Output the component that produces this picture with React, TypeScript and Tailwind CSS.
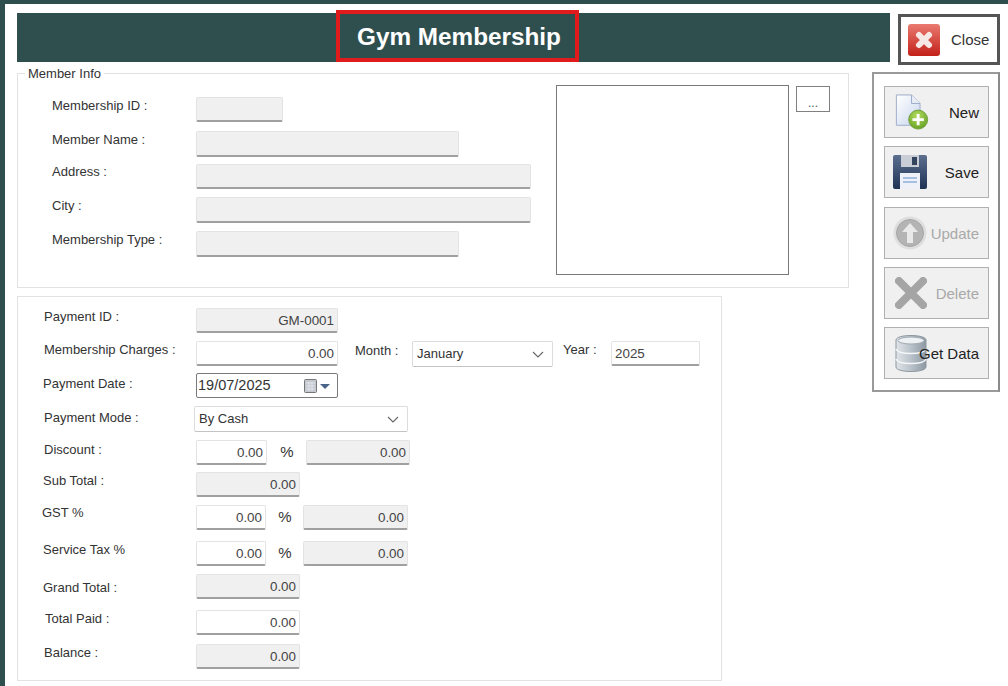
import React from "react";

const font = { fontFamily: '"Liberation Sans", Arial, sans-serif' };

const boxBase =
  "block h-full rounded-[2px] border border-[#e3e3e3] border-b-2 border-b-[#a0a0a0] px-[3px] text-[13.4px] outline-none";

function Field({ w, value = "", gray, left }: { w: string; value?: string; gray?: boolean; left?: boolean }) {
  return (
    <input
      readOnly
      value={value}
      className={`${boxBase} ${w} ${gray ? "bg-[#f0f0f0] text-[#444]" : "bg-white text-[#444]"} ${left ? "text-left" : "text-right"}`}
    />
  );
}

function Combo({ w, value, className = "" }: { w: string; value: string; className?: string }) {
  return (
    <div className={`flex h-[26px] items-center justify-between rounded-[2px] border border-[#dcdcdc] border-b-[#c4c4c4] bg-white pl-[4px] pr-[8px] text-[13px] text-[#333] ${w} ${className}`}>
      <span>{value}</span>
      <svg width="12" height="7" viewBox="0 0 12 7" fill="none" stroke="#666" strokeWidth="1.1">
        <path d="M1 1l5 5 5-5" />
      </svg>
    </div>
  );
}

function Label({ text, className = "" }: { text: string; className?: string }) {
  return <div className={`h-[16px] shrink-0 whitespace-nowrap text-[13px] leading-[16px] text-[#333] ${className}`}>{text}</div>;
}

function Percent({ className }: { className: string }) {
  return <div className={`pl-px text-center text-[15px] leading-[23px] text-[#333] ${className}`}>%</div>;
}

function NewIcon() {
  return (
    <svg width="34" height="36" viewBox="0 0 35 38">
      <defs>
        <linearGradient id="pg" x1="0" y1="0" x2="1" y2="1">
          <stop offset="0" stopColor="#ffffff" />
          <stop offset="1" stopColor="#c9d6ee" />
        </linearGradient>
        <radialGradient id="gg" cx="0.45" cy="0.3" r="0.8">
          <stop offset="0" stopColor="#b4dd60" />
          <stop offset="1" stopColor="#5d9a1e" />
        </radialGradient>
      </defs>
      <path d="M1 1h16l9 9v23H1z" fill="url(#pg)" stroke="#9aa9c9" />
      <path d="M17 1v9h9" fill="#e8edf7" stroke="#9aa9c9" />
      <circle cx="24" cy="27" r="10" fill="url(#gg)" stroke="#6f9f38" />
      <path d="M24 21v12M18 27h12" stroke="#fff" strokeWidth="3" />
    </svg>
  );
}

function SaveIcon() {
  return (
    <svg width="34" height="34" viewBox="0 0 34 34">
      <defs>
        <linearGradient id="sg" x1="0" y1="0" x2="0" y2="1">
          <stop offset="0" stopColor="#5c6f8f" />
          <stop offset="1" stopColor="#1f3355" />
        </linearGradient>
      </defs>
      <path d="M2 0h30a2 2 0 012 2v30a2 2 0 01-2 2H2a2 2 0 01-2-2V2a2 2 0 012-2z" fill="url(#sg)" />
      <rect x="8" y="0" width="18" height="12" fill="#c9ced6" />
      <rect x="19" y="2" width="5" height="8" fill="#34445f" />
      <rect x="7" y="18" width="20" height="16" fill="#eef2f8" />
      <path d="M10 23h14M10 27h14" stroke="#8fb0dc" strokeWidth="1.5" />
    </svg>
  );
}

function UpdateIcon() {
  return (
    <svg width="34" height="34" viewBox="0 0 34 34">
      <circle cx="17" cy="17" r="16.5" fill="#dedede" />
      <circle cx="17" cy="17" r="13.5" fill="#b4b4b4" stroke="#a6a6a6" />
      <path d="M17 7l8 9h-5v11h-6V16H9z" fill="#e9e9e9" />
    </svg>
  );
}

function DeleteIcon() {
  return (
    <svg width="32" height="32" viewBox="0 0 32 32">
      <path d="M4 4l24 24M28 4L4 28" stroke="#a5a5a5" strokeWidth="8" strokeLinecap="round" />
    </svg>
  );
}

function DataIcon() {
  return (
    <svg width="32" height="37" viewBox="0 0 32 37">
      <defs>
        <linearGradient id="dg" x1="0" y1="0" x2="1" y2="0">
          <stop offset="0" stopColor="#dfe4e8" />
          <stop offset="0.5" stopColor="#b9c2ca" />
          <stop offset="1" stopColor="#8d98a3" />
        </linearGradient>
      </defs>
      <path d="M1 5c0-6 30-6 30 0v27c0 6-30 6-30 0z" fill="url(#dg)" stroke="#8c979f" />
      <ellipse cx="16" cy="5.5" rx="13" ry="3.5" fill="#eef1f3" stroke="#a0aab2" />
      <path d="M1 14c2 6 28 6 30 0M1 24c2 6 28 6 30 0" fill="none" stroke="#f4f6f7" strokeWidth="1.5" />
    </svg>
  );
}

function SideButton({ icon, text, muted, className = "", iconClass = "" }: { icon: React.ReactNode; text: string; muted?: boolean; className?: string; iconClass?: string }) {
  return (
    <div className={`relative flex h-[52px] w-[105px] items-center border border-[#b0b0b0] bg-[#f0f0f0] ${className}`}>
      <div className={`flex shrink-0 items-center ${iconClass}`}>{icon}</div>
      <div className={`absolute right-[9px] top-[18px] text-[15px] leading-[16px] ${muted ? "text-[#a9a9a9]" : "text-[#222]"}`}>{text}</div>
    </div>
  );
}

function MemberRow({ label, w, labelClass = "", className }: { label: string; w: string; labelClass?: string; className: string }) {
  return (
    <div className={`flex ${className}`}>
      <div className="w-[144px] shrink-0 pt-px">
        <Label text={label} className={labelClass} />
      </div>
      <Field w={w} gray />
    </div>
  );
}

function PayRow({ label, labelClass = "mt-0", className = "", children }: { label: string; labelClass?: string; className?: string; children: React.ReactNode }) {
  return (
    <div className={`flex h-[25px] ${className}`}>
      <div className="w-[153px] shrink-0 pt-px">
        <Label text={label} className={labelClass} />
      </div>
      {children}
    </div>
  );
}

export default function App() {
  return (
    <div className="h-[686px] w-[1008px] overflow-hidden bg-[#2f4f4f] pl-[5px] pt-[4px]" style={font}>
      <div className="h-full bg-white pl-[12px] pt-[9px]">
        {/* cabecalho */}
        <div className="flex h-[59px] items-start">
          <div className="flex h-[49px] w-[873px] justify-center bg-[#2f4f4f]">
            <div className="-mt-[3px] ml-[7px] flex h-[52px] w-[243px] items-center justify-center border-[4px] border-[#e01b1b] bg-[#2f4f4f] pl-[4px] pt-[3px] text-[24.3px] font-bold text-white">
              Gym Membership
            </div>
          </div>
          <div className="ml-[8px] mt-[1px] flex h-[51px] w-[102px] items-center border-[3px] border-[#555] bg-white pl-[7px]">
            <svg width="32" height="32" viewBox="0 0 32 32">
              <defs>
                <linearGradient id="cg" x1="0" y1="0" x2="0" y2="1">
                  <stop offset="0" stopColor="#ea7a70" />
                  <stop offset="1" stopColor="#c2211a" />
                </linearGradient>
              </defs>
              <rect width="32" height="32" rx="3" fill="url(#cg)" />
              <path d="M11 11l10 10M21 11L11 21" stroke="#f6e8e6" strokeWidth="6" strokeLinecap="round" />
            </svg>
            <span className="ml-[11px] pt-[2px] text-[15px] text-[#333]">Close</span>
          </div>
        </div>

        <div className="flex items-start">
          <div className="w-[855px] shrink-0">
            {/* Member Info */}
            <div className="relative mt-[1px] flex h-[215px] w-[832px] border border-[#e2e2e2]">
              <div className="absolute -top-[8px] left-[7px] bg-white px-[3px] text-[13px] leading-[16px] text-[#333]">Member Info</div>
              <div className="w-[538px] shrink-0 pl-[34px] pt-[23px]">
                <MemberRow label="Membership ID :" w="w-[87px]" className="h-[25px]" />
                <MemberRow label="Member Name :" w="w-[263px]" className="mt-[9px] h-[26px]" />
                <MemberRow label="Address :" w="w-[335px]" labelClass="-mt-px" className="mt-[7px] h-[25px]" />
                <MemberRow label="City :" w="w-[335px]" className="mt-[8px] h-[26px]" />
                <MemberRow label="Membership Type :" w="w-[263px]" className="mt-[8px] h-[26px]" />
              </div>
              <div className="mt-[11px] h-[190px] w-[233px] border border-[#7a7a7a] bg-white" />
              <div className="ml-[7px] mt-[12px] flex h-[26px] w-[34px] items-end justify-center border border-[#808080] pb-[2px] text-[12px] leading-[12px] text-[#555]">...</div>
            </div>

            {/* Payment */}
            <div className="mt-[8px] h-[385px] w-[705px] border border-[#e2e2e2] pl-[25px] pt-[11px]">
              <PayRow label="Payment ID :" labelClass="ml-px">
                <Field w="w-[142px]" value="GM-0001" gray />
              </PayRow>
              <PayRow label="Membership Charges :" labelClass="ml-px" className="mt-[8px]">
                <Field w="w-[142px]" value="0.00" />
                <Label text="Month :" className="ml-[17px] mt-[2px] w-[57px]" />
                <Combo w="w-[141px]" value="January" className="pl-[3px]" />
                <Label text="Year :" className="ml-[10px] mt-px w-[48px]" />
                <Field w="w-[89px]" value="2025" left />
              </PayRow>
              <PayRow label="Payment Date :" labelClass="mt-[2px]" className="mt-[7px]">
                <div className="flex h-[25px] w-[142px] items-center rounded-[2px] border border-[#7a7a7a] bg-white pl-px text-[14.5px] text-[#333]">
                  <span>19/07/2025</span>
                  <svg className="ml-[33px]" width="27" height="14" viewBox="0 0 27 14">
                    <rect x="0.5" y="0.5" width="12" height="13" rx="1" fill="#c4c8d0" stroke="#777" />
                    <path d="M2 4h9M2 7h9M2 10h9M5 3v9M8 3v9" stroke="#eef0f3" strokeWidth="0.7" />
                    <path d="M16 5h10l-5 5z" fill="#4a6489" />
                  </svg>
                </div>
              </PayRow>
              <PayRow label="Payment Mode :" labelClass="ml-px mt-[3px]" className="mt-[8px]">
                <Combo w="w-[214px]" value="By Cash" className="-ml-[2px]" />
              </PayRow>
              <PayRow label="Discount :" labelClass="ml-px mt-px" className="mt-[9px]">
                <Field w="w-[71px]" value="0.00" />
                <Percent className="w-[39px]" />
                <Field w="w-[104px]" value="0.00" gray />
              </PayRow>
              <PayRow label="Sub Total :" className="mt-[7px]">
                <Field w="w-[104px]" value="0.00" gray />
              </PayRow>
              <PayRow label="GST %" labelClass="-ml-px -mt-px" className="mt-[8px]">
                <Field w="w-[70px]" value="0.00" />
                <Percent className="w-[37px]" />
                <Field w="w-[105px]" value="0.00" gray />
              </PayRow>
              <PayRow label="Service Tax %" className="mt-[11px]">
                <Field w="w-[70px]" value="0.00" />
                <Percent className="w-[37px]" />
                <Field w="w-[105px]" value="0.00" gray />
              </PayRow>
              <PayRow label="Grand Total :" labelClass="mt-[5px]" className="mt-[8px]">
                <Field w="w-[104px]" value="0.00" gray />
              </PayRow>
              <PayRow label="Total Paid :" labelClass="ml-[2px]" className="mt-[11px]">
                <Field w="w-[104px]" value="0.00" />
              </PayRow>
              <PayRow label="Balance :" labelClass="ml-px" className="mt-[9px]">
                <Field w="w-[104px]" value="0.00" gray />
              </PayRow>
            </div>
          </div>

          {/* botoes */}
          <div className="h-[320px] w-[128px] shrink-0 border-2 border-[#9a9a9a] border-r-[#8a8a8a] pl-[10px] pt-[12px]">
            <SideButton icon={<NewIcon />} text="New" iconClass="ml-[10px]" />
            <SideButton icon={<SaveIcon />} text="Save" iconClass="ml-[8px]" className="mt-[8px]" />
            <SideButton icon={<UpdateIcon />} text="Update" muted iconClass="ml-[8px]" className="mt-[9px]" />
            <SideButton icon={<DeleteIcon />} text="Delete" muted iconClass="ml-[10px]" className="mt-[8px]" />
            <SideButton icon={<DataIcon />} text="Get Data" iconClass="ml-[10px]" className="mt-[8px]" />
          </div>
        </div>
      </div>
    </div>
  );
}
